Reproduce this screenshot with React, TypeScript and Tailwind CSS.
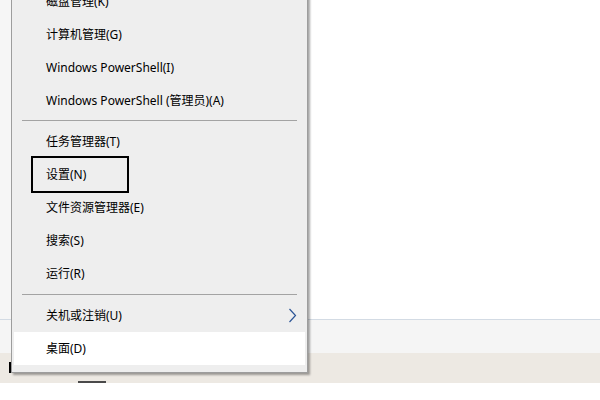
import React from "react";

const font = { fontFamily: "'Noto Sans', 'Noto Sans CJK SC', sans-serif" };

function Item({
  label,
  active,
  boxed,
  arrow,
}: {
  label: string;
  active?: boolean;
  boxed?: boolean;
  arrow?: boolean;
}) {
  return (
    <div
      className={`relative flex h-[33px] items-center pl-[32px] pr-2 text-[12px] text-black ${
        active ? "bg-white" : ""
      }`}
    >
      <span>{label}</span>
      {boxed && (
        <div className="absolute left-[17px] top-[-2px] h-[37px] w-[98px] border-2 border-black" />
      )}
      {arrow && (
        <svg
          className="ml-auto"
          width="9"
          height="15"
          viewBox="0 0 9 15"
          fill="none"
        >
          <path d="M1.5 1 L7.5 7.5 L1.5 14" stroke="#2c5596" strokeWidth="1.2" />
        </svg>
      )}
    </div>
  );
}

function Separator({ top, bottom }: { top: string; bottom: string }) {
  return <div className={`mx-2 h-px bg-[#a3a3a3] ${top} ${bottom}`} />;
}

export default function App() {
  return (
    <div className="relative flex h-[400px] w-[600px] flex-col overflow-hidden bg-white" style={font}>
      {/* desktop behind the menu */}
      <div className="flex h-[319px]">
        <div className="w-[11px] bg-[#f6f6f6]" />
        <div className="flex-1 bg-white" />
      </div>
      <div className="h-px bg-[#d3dbe4]" />
      <div className="h-[33px] bg-[#f5f5f5]" />
      <div className="relative h-[30px] bg-[#ede9e3]">
        <div className="absolute left-[9px] top-[9px] h-[11px] w-[3px] bg-black" />
        <div className="absolute bottom-[0px] left-[78px] h-[2px] w-[28px] bg-[#4a4a4a]" />
      </div>
      <div className="flex-1 bg-white" />

      {/* Win+X menu */}
      <div className="absolute left-[11px] top-[-16px] w-[297px] border border-[#9d9d9d] bg-[#eeeeee] px-[2px] pb-[7px] shadow-[2px_2px_2px_rgba(0,0,0,0.35)]">
        <Item label="磁盘管理(K)" />
        <Item label="计算机管理(G)" />
        <Item label="Windows PowerShell(I)" />
        <Item label="Windows PowerShell (管理员)(A)" />
        <Separator top="mt-[3px]" bottom="mb-[4px]" />
        <Item label="任务管理器(T)" />
        <Item label="设置(N)" boxed />
        <Item label="文件资源管理器(E)" />
        <Item label="搜索(S)" />
        <Item label="运行(R)" />
        <Separator top="mt-[4px]" bottom="mb-[4px]" />
        <Item label="关机或注销(U)" arrow />
        <Item label="桌面(D)" active />
      </div>
    </div>
  );
}
